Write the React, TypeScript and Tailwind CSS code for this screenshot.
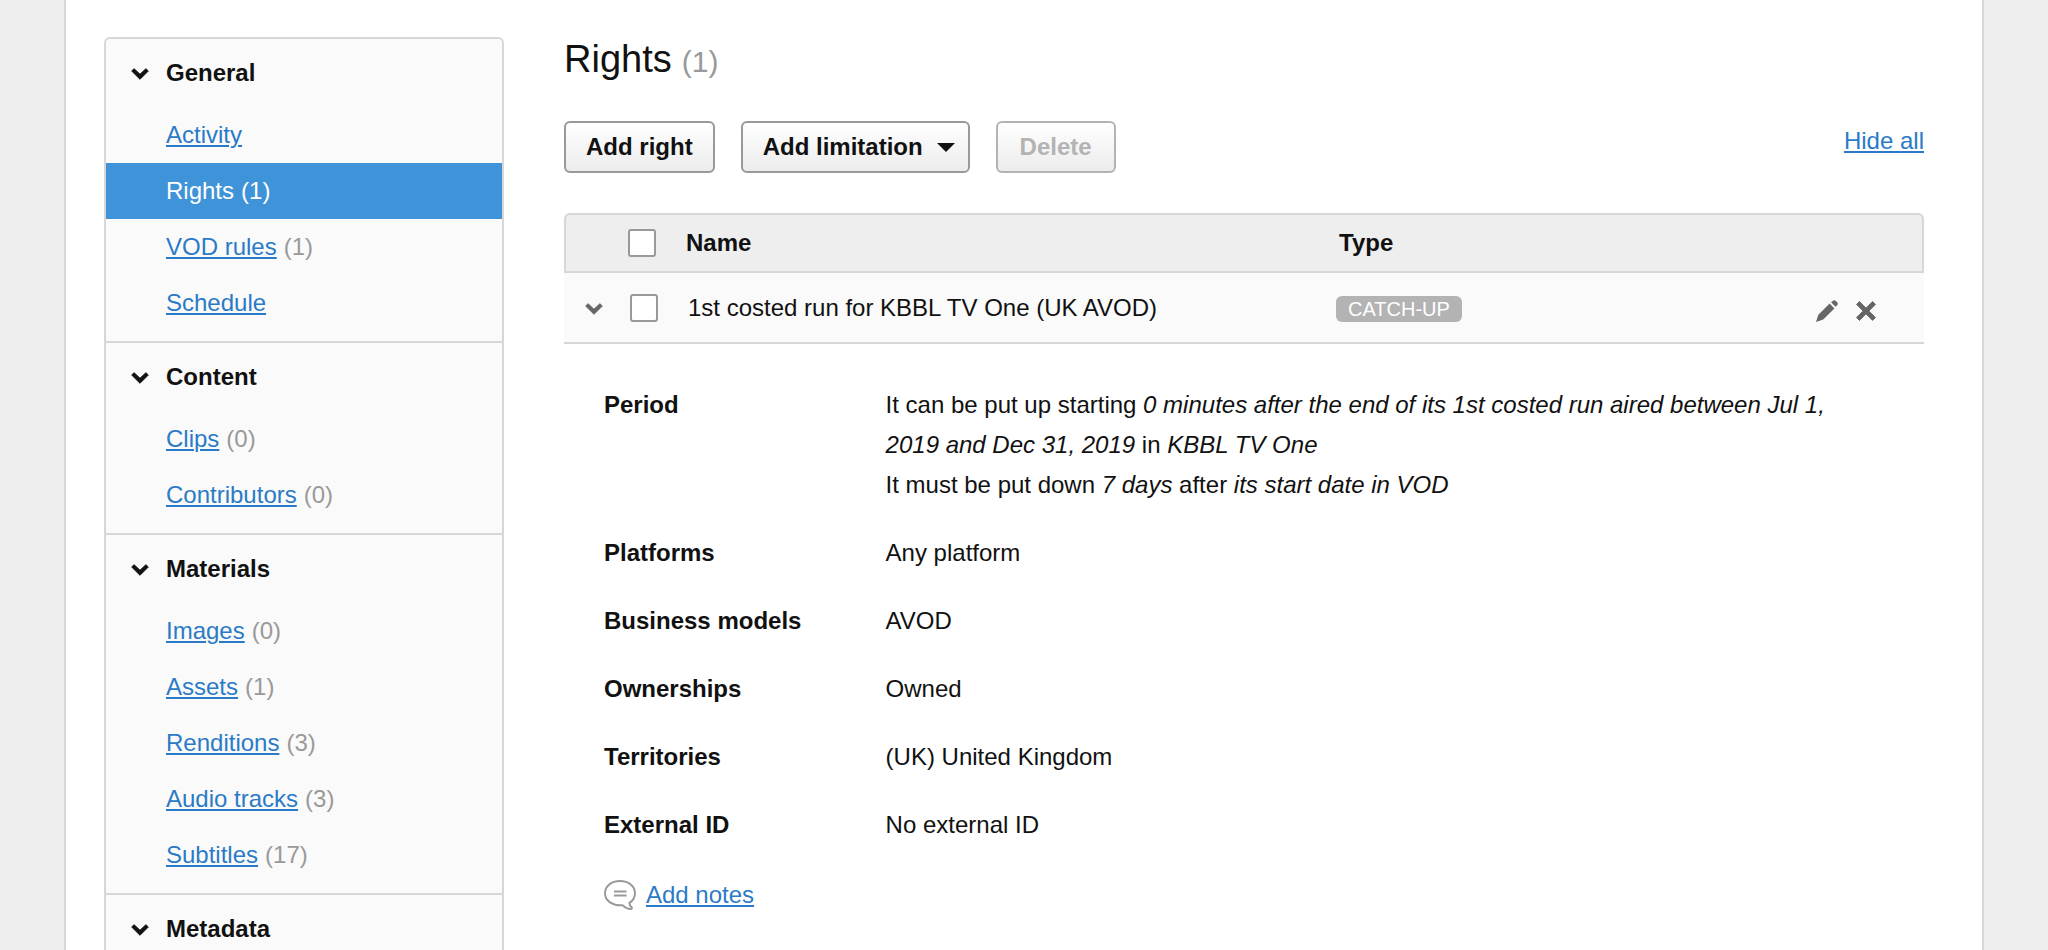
import { useState, type ReactNode } from "react";

type NavItem = { label: string; count?: number; active?: boolean };
type NavSection = { title: string; items: NavItem[] };

const sections: NavSection[] = [
  {
    title: "General",
    items: [
      { label: "Activity" },
      { label: "Rights", count: 1, active: true },
      { label: "VOD rules", count: 1 },
      { label: "Schedule" },
    ],
  },
  {
    title: "Content",
    items: [
      { label: "Clips", count: 0 },
      { label: "Contributors", count: 0 },
    ],
  },
  {
    title: "Materials",
    items: [
      { label: "Images", count: 0 },
      { label: "Assets", count: 1 },
      { label: "Renditions", count: 3 },
      { label: "Audio tracks", count: 3 },
      { label: "Subtitles", count: 17 },
    ],
  },
  { title: "Metadata", items: [] },
];

const details: { term: string; value: ReactNode }[] = [
  {
    term: "Period",
    value: (
      <>
        <p>
          It can be put up starting{" "}
          <em>0 minutes after the end of its 1st costed run aired between Jul 1, 2019 and Dec 31, 2019</em> in{" "}
          <em>KBBL TV One</em>
        </p>
        <p>
          It must be put down <em>7 days</em> after <em>its start date in VOD</em>
        </p>
      </>
    ),
  },
  { term: "Platforms", value: "Any platform" },
  { term: "Business models", value: "AVOD" },
  { term: "Ownerships", value: "Owned" },
  { term: "Territories", value: "(UK) United Kingdom" },
  { term: "External ID", value: "No external ID" },
];

const linkClass = "text-[#2a7ac7] underline decoration-2 underline-offset-2";

function Chevron({ open = true }: { open?: boolean }) {
  return (
    <svg
      width="18"
      height="12"
      viewBox="0 0 18 12"
      fill="currentColor"
      stroke="currentColor"
      strokeWidth="1"
      strokeLinejoin="round"
      className={open ? "mt-0.5 shrink-0" : "mt-0.5 shrink-0 -rotate-90"}
      aria-hidden="true"
    >
      <path d="M0.7 3 3.1 0.7 9 6.3 14.9 0.7 17.3 3 9 11.3Z" />
    </svg>
  );
}

function PencilIcon() {
  return (
    <svg width="22" height="22" viewBox="0 0 22 22" fill="currentColor" aria-hidden="true">
      <path d="M0 22 2.4 14.8 13.6 3.6 18.4 8.4 7.2 19.4Z" />
      <path d="M15.2 2.4 16.9 0.7Q18.2 -0.4 19.5 0.7L21.3 2.5Q22.4 3.8 21.3 5.1L19.6 6.8Z" />
    </svg>
  );
}

function CrossIcon() {
  return (
    <svg
      width="20"
      height="20"
      viewBox="0 0 20 20"
      fill="currentColor"
      stroke="currentColor"
      strokeWidth="1"
      strokeLinejoin="round"
      aria-hidden="true"
    >
      <path d="M3.4 0.6 10 7.2 16.6 0.6 19.4 3.4 12.8 10 19.4 16.6 16.6 19.4 10 12.8 3.4 19.4 0.6 16.6 7.2 10 0.6 3.4Z" />
    </svg>
  );
}

function NoteIcon() {
  return (
    <svg
      width="32"
      height="30"
      viewBox="0 0 32 30"
      fill="none"
      stroke="#999"
      strokeWidth="2"
      strokeLinejoin="round"
      className="shrink-0"
      aria-hidden="true"
    >
      <path d="M18.6 25.2C8.6 26 1 20.8 1 13.2 1 6.4 7.4 1 16 1S31 6.4 31 13.2C31 17.4 29 20.7 25.4 22.9 25.4 24.9 26.4 26.3 27.8 27.3 28.3 28.2 27.4 29 26.4 29 23.4 29 21 27.4 18.6 25.2Z" />
      <path d="M10 11.5H22.5M10 15.5H22.5" />
    </svg>
  );
}

function Checkbox({ label }: { label: string }) {
  return (
    <input
      type="checkbox"
      aria-label={label}
      className="block size-7 appearance-none rounded-[3px] border-2 border-[#999] bg-white checked:bg-[#3f93d9]"
    />
  );
}

function SidebarSection({ section }: { section: NavSection }) {
  const [open, setOpen] = useState(true);
  return (
    <section className="border-b-2 border-[#d7d7d7] pb-2.5">
      <h2 className="font-bold">
        <button
          type="button"
          aria-expanded={open}
          onClick={() => setOpen(!open)}
          className="flex h-[68px] w-full items-center gap-[17px] pl-[25px] text-left"
        >
          <Chevron open={open} />
          {section.title}
        </button>
      </h2>
      {open && (
        <ul>
          {section.items.map((item) => (
            <li
              key={item.label}
              className={
                item.active
                  ? "flex h-14 items-center gap-[7px] bg-[#3f93d9] pl-[60px] text-white"
                  : "flex h-14 items-center gap-[7px] pl-[60px] text-[#999]"
              }
            >
              <a href="#" className={item.active ? "text-white" : linkClass}>
                {item.label}
              </a>
              {item.count !== undefined && <span>({item.count})</span>}
            </li>
          ))}
        </ul>
      )}
    </section>
  );
}

const buttonClass =
  "flex h-[52px] items-center justify-center rounded-md border-2 bg-linear-to-b from-white to-[#ececec] px-5 font-bold";

export default function App() {
  const [open, setOpen] = useState(true);

  return (
    <div className="min-h-screen bg-[#eee] px-16 font-['Liberation_Sans',Arial,sans-serif] text-2xl/[40px] text-[#111]">
      <div className="flex min-h-screen items-start gap-[60px] border-x-2 border-[#d7d7d7] bg-white px-[38px] pt-[37px] pr-[58px]">
        <nav className="w-[400px] shrink-0 rounded-t-md border-2 border-b-0 border-[#d7d7d7] bg-[#fafafa]">
          {sections.map((section) => (
            <SidebarSection key={section.title} section={section} />
          ))}
        </nav>

        <main className="min-w-0 flex-1">
          <h1 className="flex items-baseline gap-2.5 text-[38px]/[44px]">
            Rights <span className="text-3xl/[30px] text-[#999]">(1)</span>
          </h1>

          <div className="mt-10 flex items-start gap-[26px]">
            <button type="button" className={`${buttonClass} border-[#999]`}>
              Add right
            </button>
            <button type="button" className={`${buttonClass} gap-3.5 border-[#999] pr-[13px]`}>
              Add limitation
              <svg width="18" height="9" viewBox="0 0 18 9" fill="currentColor" aria-hidden="true">
                <path d="M0 0H18L9 9Z" />
              </svg>
            </button>
            <button type="button" disabled className={`${buttonClass} w-[120px] border-[#b3b3b3] text-[#b3b3b3]`}>
              Delete
            </button>
            <a href="#" className={`${linkClass} ml-auto`}>
              Hide all
            </a>
          </div>

          <table className="mt-10 w-full table-fixed border-separate border-spacing-0 text-left">
            <colgroup>
              <col className="w-[60px]" />
              <col className="w-[62px]" />
              <col className="w-[650px]" />
              <col />
              <col className="w-[120px]" />
            </colgroup>
            <thead>
              <tr className="h-[60px]">
                <th className="rounded-tl-md border-y-2 border-l-2 border-[#d7d7d7] bg-[#eee] p-0" />
                <th className="border-y-2 border-[#d7d7d7] bg-[#eee] p-0 pl-1">
                  <Checkbox label="Select all rights" />
                </th>
                <th className="border-y-2 border-[#d7d7d7] bg-[#eee] p-0">Name</th>
                <th className="border-y-2 border-[#d7d7d7] bg-[#eee] p-0 pl-[3px]">Type</th>
                <th className="rounded-tr-md border-y-2 border-r-2 border-[#d7d7d7] bg-[#eee] p-0" />
              </tr>
            </thead>
            <tbody>
              <tr className="h-[71px] bg-[#fafafa]">
                <td className="border-b-2 border-[#d7d7d7] p-0 pl-[21px] text-[#666]">
                  <button
                    type="button"
                    aria-label="Toggle details"
                    aria-expanded={open}
                    onClick={() => setOpen(!open)}
                    className="block"
                  >
                    <Chevron open={open} />
                  </button>
                </td>
                <td className="border-b-2 border-[#d7d7d7] p-0 pl-1.5">
                  <Checkbox label="Select 1st costed run for KBBL TV One" />
                </td>
                <td className="border-b-2 border-[#d7d7d7] p-0 pl-0.5">1st costed run for KBBL TV One (UK AVOD)</td>
                <td className="border-b-2 border-[#d7d7d7] p-0 pt-0.5">
                  <span className="flex h-[26px] w-fit items-center rounded-md bg-[#b3b3b3] px-3 text-xl/[26px] text-white">
                    CATCH-UP
                  </span>
                </td>
                <td className="border-b-2 border-[#d7d7d7] p-0 pt-1.5 text-[#666]">
                  <div className="flex items-center gap-[18px] pl-3">
                    <button type="button" aria-label="Edit right">
                      <PencilIcon />
                    </button>
                    <button type="button" aria-label="Remove right">
                      <CrossIcon />
                    </button>
                  </div>
                </td>
              </tr>
            </tbody>
          </table>

          {open && (
            <div className="px-10 pt-[41px]">
              <dl className="grid grid-cols-[22%_1fr] gap-y-7">
                {details.map((detail) => (
                  <div key={detail.term} className="contents">
                    <dt className="font-bold">{detail.term}</dt>
                    <dd className="pr-5">{detail.value}</dd>
                  </div>
                ))}
              </dl>
              <div className="mt-[30px] flex items-center gap-2.5 pb-10">
                <NoteIcon />
                <a href="#" className={linkClass}>
                  Add notes
                </a>
              </div>
            </div>
          )}
        </main>
      </div>
    </div>
  );
}
